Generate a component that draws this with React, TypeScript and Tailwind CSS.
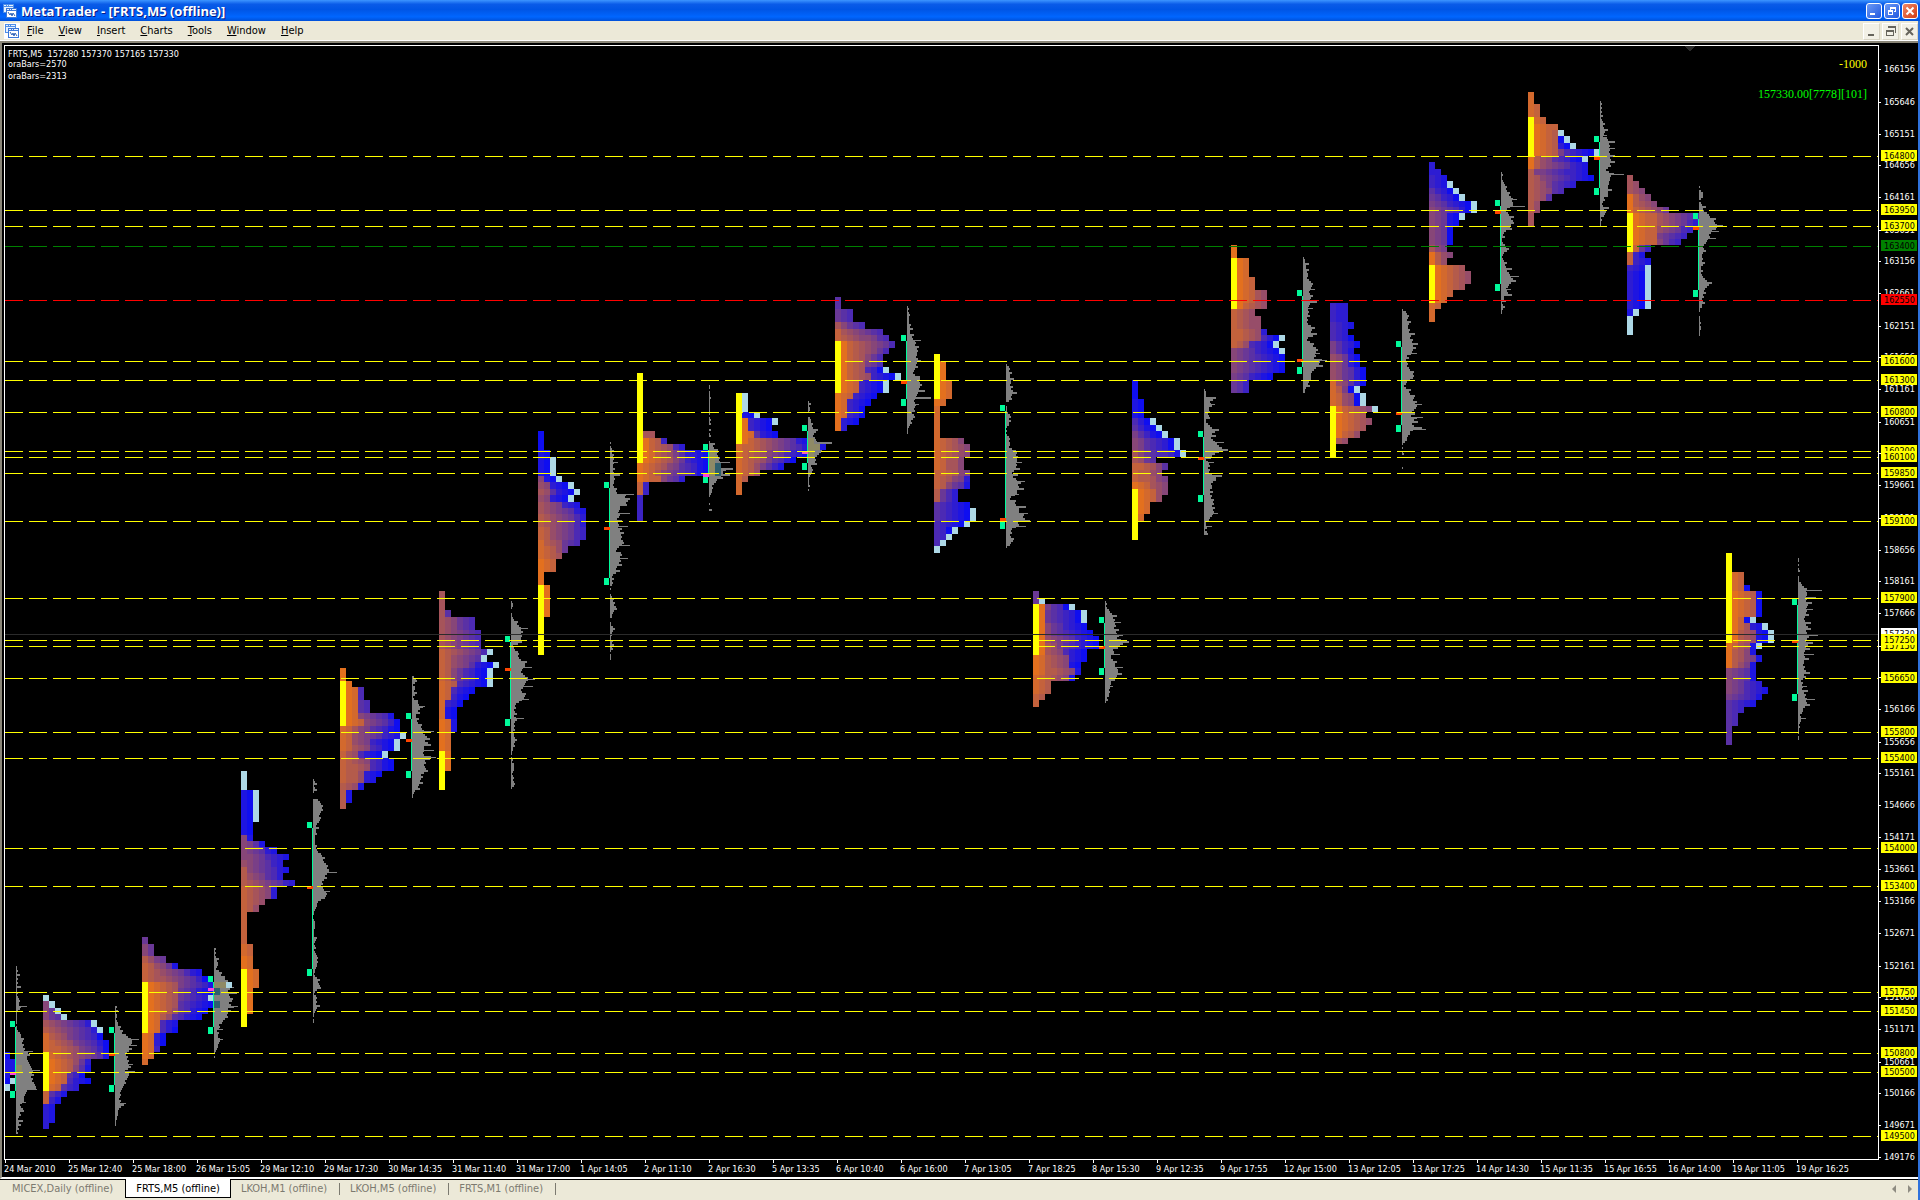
import { Fragment } from "react";

const TOP_PRICE = 164800;
const POINTS_PER_PX = 15.612;

const rowY = (price: number) => Math.round(155.7 + (TOP_PRICE - price) / POINTS_PER_PX);
const lineY = (price: number) => Math.round(156 + (TOP_PRICE - price) / POINTS_PER_PX);

// half-hour periods of a session: first one yellow, last one light blue, the rest fade orange -> blue
const cellColors: Record<string, string> = {
  Y: "#ffff00",
  a: "#e3701e",
  b: "#d3692d",
  c: "#c4623c",
  d: "#b45b4b",
  e: "#a6545a",
  f: "#974d69",
  g: "#874678",
  h: "#793f87",
  i: "#6a3896",
  j: "#5a31a5",
  k: "#4c2ab4",
  l: "#3c23c3",
  m: "#2d1cd2",
  n: "#1e15e1",
  o: "#0f0ef0",
  L: "#add8e6",
  K: "#8f8a66",
  T: "#2f5f6e",
};

type Session = {
  top: number; // price of the first row
  rows: string; // one word per 100 points, "word*3" repeats it
  volumeY: number;
  volume: string; // base 36 width for every 2px, "." is empty
  spikes: number[][];
  high: number;
  low: number;
  poc: number;
  pocColor?: string;
};

const sessions: Session[] = [
  {
    top: 150800,
    rows: "__________o __________nn __________nnK __________n __________oL __________L",
    volumeY: 966,
    volume: "11214121215112123433542111111.1124558768798cebbcdefghgifhgijkkba98886457845327352312",
    spikes: [[1006, 11], [1051, 17], [1070, 24], [1089, 21], [1102, 10]],
    high: 1021,
    low: 1091,
    poc: 1072,
    pocColor: "#ff40e0",
  },
  {
    top: 151700,
    rows: "L gL giL gijL efghijkmL defghijkmL bdefhijklo bcdefhijkmo bccdefhijlo Ybcdefghijn Yabcdfim Yabcdgjn Yabcjlo Yabckmno Ybcjlm cjln cln mn*3 m",
    volumeY: 1006,
    volume: "21312212336587bdghhgehecbdcedegdaeedcab987656546596433322111",
    spikes: [[1039, 24], [1045, 22], [1064, 18], [1071, 20], [1103, 11]],
    high: 1027,
    low: 1085,
    poc: 1053,
  },
  {
    top: 152600,
    rows: "i gi*2 dfhi cdfgin cdefghikmn cdeefghijlo YabcdehijklnKKL YabcdeijkmnoT YabcdeijklmL YabcdejklmnoT Yabcdfjkmno Yabdfjkmno Yabkmn Yabkmo abmo*2 abl ab b",
    volumeY: 948,
    volume: "21212534432587bbehiigehfgjifhkehedeb98565354466544321.1",
    spikes: [[987, 20], [993, 23], [1006, 24], [1029, 9], [1039, 9]],
    high: 976,
    low: 1027,
    poc: 988,
    pocColor: "#ff40e0",
  },
  {
    top: 155200,
    rows: "L*3 noL*5 no*2 gn ghjn ghijmn gghiklmn fghijlm dghijkmn dfghjkm defghijlm cdefgm*2 cdef cdf c*5 bc*2 ab*2 Yab*3 Ya*4 Y*2",
    volumeY: 779,
    volume: "1241241...578a9a87687643633422222434589cabdfeggeceb9a8abdedc85443211..1222211114321231234545443221247567842134343743211.11",
    spikes: [[872, 24], [891, 17]],
    high: 822,
    low: 969,
    poc: 886,
  },
  {
    top: 156800,
    rows: "a*2 Ya Yabk*2 Yabjk*2 Yabghijkn Yabcghijlo bceghjklno bcfghijlmnL bcfghlmnoL bcefgklnoL cefkmnoL cdefgklno cddefklno cddfmno cddfmn defn dn*2 d",
    volumeY: 676,
    volume: "245313325312667b86844756a9acbdfidgjcccbcjidecdegc9b98b7683211",
    spikes: [[706, 13], [731, 22], [750, 22], [757, 24]],
    high: 713,
    low: 771,
    poc: 739,
  },
  {
    top: 158000,
    rows: "e*3 ej efgijk*2 efghijk*3 cdefghikL cdfghijL cdfghjmnoL cdgiklnoL*2 bcdklmnoL bckmno bclno blmo bno*2 abn*2 ab*3 Ya*3 Y*3",
    volumeY: 601,
    volume: "1221..1123768aacabaab72347878ageecbacehhfedcabfedb854534635643434233464342211.1213333212323431",
    spikes: [[628, 17], [667, 21], [679, 24], [686, 22], [699, 18], [718, 13]],
    high: 636,
    low: 719,
    poc: 668,
  },
  {
    top: 160500,
    rows: "o*3 no noL*3 gnoL fgmnoL efjmnoL fgmnoL efghlmn efghijmn defghikm*2 cdfghikl*2 bdefijk bcdfi bcde abc*2 a*2 Ya*5 Y*6",
    volumeY: 442,
    volume: "1.12424343433534a454434767gfkighaa98a97c898caebcbdec976bcaab9c76a6324232.1..124354674322..113532211324231.111",
    spikes: [[462, 8], [494, 24], [513, 20], [526, 18], [545, 20], [558, 18]],
    high: 482,
    low: 578,
    poc: 527,
  },
  {
    top: 161400,
    rows: "Y*9 Yee Yacdl Yacdefkm YabdefhjmmnoK YabcdegilmnoK abcdeghjklnoKT abceghijklnoKT abccgijm cl*2 l*4",
    volumeY: 385,
    volume: "11.111211111111.1212..2.12..16459989babbccheece875343321...1..3",
    spikes: [[462, 21], [468, 24], [469, 24], [474, 21], [475, 21]],
    high: 444,
    low: 476,
    poc: 474,
    pocColor: "#ff40e0",
  },
  {
    top: 161100,
    rows: "YL*3 YnoL YalmnoL Yalmno Yabjmno YacdefghijmnK bccdefghijkmKKn bcdefghiklmoK bcdefhjkmo bcdfhjln bcdf bd b*2",
    volumeY: 401,
    volume: "131221..233545a865789dgeedb9787934543211112.1",
    spikes: [[442, 24], [443, 24]],
    high: 425,
    low: 463,
    poc: 451,
    pocColor: "#f060c0",
  },
  {
    top: 162600,
    rows: "j*2 ijk*2 egijk cefghijk cdefgghjk Yacdefghik Yacdefgik Yacdegik Yacdehik YacdekloL YacdeflmnoL YabclmnoL*2 abclmno ablmno ablmo*2 amno am",
    volumeY: 306,
    volume: "12123222243633756898cabaa9bea9b8768ddcdfdciba9878987857864532111",
    spikes: [[340, 14], [397, 24], [398, 24], [404, 12]],
    high: 335,
    low: 399,
    poc: 381,
  },
  {
    top: 161700,
    rows: "Y Ya*3 Yab*3 ab b*5 bcdeg bcdefg*2 bceeg*2 ccdegh cdeghm cdgijn dikm*2 jklmno jklmnoL*2 klmnoL kloL klL kL L",
    volumeY: 364,
    volume: "13436448554757b6563..11124535331.1.13434436abacbbabae86c7abfcdibb954a9akdddihjocda6564587541",
    spikes: [[462, 16], [481, 19], [494, 13], [513, 22], [526, 20]],
    high: 405,
    low: 522,
    poc: 518,
  },
  {
    top: 158000,
    rows: "i iL YahjkoL YaijklmoL*2 Yagijlmno Yagijklmno Yafghijlmno Yaefhjklmno Yaefgkmno abdefgmno abdefgno abddefgn bcdefgn bcd*2 cd c",
    volumeY: 601,
    volume: "1212457c8a9ab9ebcecgoifd899668caacddhcba66554544231",
    spikes: [[622, 16], [635, 18], [654, 15], [667, 18], [686, 8]],
    high: 617,
    low: 668,
    poc: 646,
  },
  {
    top: 161300,
    rows: "o*3 no*3 kmoL jlnoL hjlnoL ghjklmoL*2 egijkklnL efij ccdegj cddfg cddegh abcefg Yabcfg Yabcf Yab*2 Yb Y*3",
    volumeY: 389,
    volume: "1222c967855645622468fb8c79bdfiofb8724564658icc978869687a9a8b9a98652223134",
    spikes: [[404, 11], [442, 20], [449, 24], [462, 10], [513, 14], [526, 8]],
    high: 431,
    low: 495,
    poc: 457,
  },
  {
    top: 163400,
    rows: "a*2 Yab*3 Yabc*2 Yabcef*2 Yacdef cdef cdeff*2 ccdefm ccdefkmoL cdfklmoL ghijlmnoL ghijklmno*3 hijlmno ijl*2",
    volumeY: 257,
    volume: "1226336455468a98767a87e765565745458c98ea547badfdcdbjhgkdb98888657322",
    spikes: [[289, 12], [308, 10], [353, 17], [360, 24], [366, 20]],
    high: 290,
    low: 367,
    poc: 359,
  },
  {
    top: 162500,
    rows: "lmm*3 klmn klm klmo hjlmo hjln fgimo*2 fgijmo*2 bfgjmo bdhoL bcfgoL*2 YacdefgL Yabcde Yabcdef Yabcde Yacdf Yef Y*2",
    volumeY: 309,
    volume: "145765976687d98bagbeba957456578cbcb85424978dcbfdfecad9fcgackb8865531.1.12......1",
    spikes: [[353, 15], [404, 20], [417, 21], [429, 24]],
    high: 341,
    low: 425,
    poc: 412,
  },
  {
    top: 164700,
    rows: "m mm lmn lmnL jlmoL ijlmoL hijlmnoL ghijkmoL ghinoL ghino ghio*3 egh adfg adf Yabcde Yabcdef*2 Yabcde Yabc Yab bc b*2",
    volumeY: 172,
    volume: "121123465698acbcc96578dacda9b5324112458632123645b689acfa87567b335124211",
    spikes: [[199, 16], [206, 24], [276, 18], [289, 10]],
    high: 200,
    low: 284,
    poc: 211,
  },
  {
    top: 165800,
    rows: "b*2 bc*2 Ybc Yabcc YabcdL YabcdoL YabcdmoL YabcdhklmnoL adfgjklnoL adfghijlmn dhhijkllmn deghijklmno defhjklm defgjk defj df*2 e*2",
    volumeY: 101,
    volume: "12121213123534854378f9a9a9afabfab869ebaa9988c888453239465412111",
    spikes: [[135, 7], [148, 15], [174, 24]],
    high: 136,
    low: 188,
    poc: 157,
  },
  {
    top: 164500,
    rows: "e ef efg adfg adefg acdefgi Yabccefghijk Yabccefghikm Yabccfghikl Yabcchijkl Yabccgikl Ycil cln clmn lmnL mnoL*6 nL L*3",
    volumeY: 186,
    volume: "1.24442.237458abhfgiihdcab9875457433436422423468da8657453463311..1112122111",
    spikes: [[225, 24], [231, 20], [238, 17]],
    high: 213,
    low: 290,
    poc: 227,
  },
  {
    top: 158600,
    rows: "Y*3 Ybc*2 Ybco Yabcdo*4 YacoL YacemnL YadefnoL*2 acefnL adegn adeghn adfhn ghijn*2 ghiklm ghiklmn hijkln jklmn jkl jk*2 j*3",
    volumeY: 558,
    volume: "11.1.12..1113469899898ea9898b767d8ad89ab98fa8c7667b665768c68535454a687989c75542333212111.11",
    spikes: [[590, 24], [597, 18], [609, 15], [635, 20], [646, 14], [654, 16], [686, 9], [699, 17], [718, 8]],
    high: 599,
    low: 694,
    poc: 640,
  },
];

const levels = [
  164800, 163950, 163700, 163400, 162550, 161600, 161300, 160800, 160200, 160100, 159850, 159100, 157900,
  157150, 157250, 156650, 155800, 155400, 154000, 153400, 151750, 151450, 150800, 150500, 149500,
];

const levelColor = (price: number) => (price === 163400 ? "#008000" : price === 162550 ? "#ff0000" : "#ffff00");

const scale = [
  166156, 165646, 165151, 164656, 164161, 163651, 163156, 162661, 162151, 161656, 161161, 160651, 160156, 159661,
  159151, 158656, 158161, 157666, 157156, 156661, 156166, 155656, 155161, 154666, 154171, 153661, 153166, 152671,
  152161, 151666, 151171, 150661, 150166, 149671, 149176,
];

const times = [
  "24 Mar 2010", "25 Mar 12:40", "25 Mar 18:00", "26 Mar 15:05", "29 Mar 12:10", "29 Mar 17:30", "30 Mar 14:35",
  "31 Mar 11:40", "31 Mar 17:00", "1 Apr 14:05", "2 Apr 11:10", "2 Apr 16:30", "5 Apr 13:35", "6 Apr 10:40",
  "6 Apr 16:00", "7 Apr 13:05", "7 Apr 18:25", "8 Apr 15:30", "9 Apr 12:35", "9 Apr 17:55", "12 Apr 15:00",
  "13 Apr 12:05", "13 Apr 17:25", "14 Apr 14:30", "15 Apr 11:35", "15 Apr 16:55", "16 Apr 14:00", "19 Apr 11:05",
  "19 Apr 16:25",
];

const menus = ["File", "View", "Insert", "Charts", "Tools", "Window", "Help"];
const tabs = ["MICEX,Daily (offline)", "FRTS,M5 (offline)", "LKOH,M1 (offline)", "LKOH,M5 (offline)", "FRTS,M1 (offline)"];

function expandRows(rows: string) {
  return rows.split(" ").flatMap((word) => {
    const [cells, count] = word.split("*");
    return Array.from({ length: Number(count ?? 1) }, () => cells);
  });
}

function Profile({ session, x }: { session: Session; x: number }) {
  const cells = expandRows(session.rows).flatMap((row, r) => {
    const y = rowY(session.top - r * 100);
    const h = rowY(session.top - (r + 1) * 100) - y;
    return row
      .split("")
      .map((c, i) => ({ c, x: x + i * 6, y, h }))
      .filter((cell) => cell.c !== "_");
  });
  const draw = (list: typeof cells) =>
    list.map((cell) => (
      <rect key={`${cell.x}-${cell.y}`} x={cell.x} y={cell.y} width={6} height={cell.h} fill={cellColors[cell.c]} />
    ));
  // long rows run over the volume bars
  const overlaid = (cellX: number) => cellX >= x + 72;

  return (
    <g>
      {draw(cells.filter((cell) => !overlaid(cell.x)))}
      <g fill="#808080">
        {session.volume.split("").map((w, i) =>
          w === "." ? null : (
            <rect key={i} x={x + 72} y={session.volumeY + i * 2} width={parseInt(w, 36)} height={2} />
          )
        )}
        {session.spikes.map(([y, w]) => (
          <rect key={`s${y}`} x={x + 72} y={y} width={w} height={1} />
        ))}
      </g>
      {draw(cells.filter((cell) => overlaid(cell.x)))}
      <rect x={x + 71} y={session.high + 6} width={1} height={session.low - session.high - 6} fill="#00fa9a" />
      <rect x={x + 66} y={session.high} width={5} height={6} fill="#00fa9a" />
      <rect x={x + 66} y={session.low} width={5} height={7} fill="#00fa9a" />
      <rect x={x + 66} y={session.poc} width={6} height={3} fill={session.pocColor ?? "#ff4500"} />
    </g>
  );
}

function Chart() {
  return (
    <svg
      viewBox="2 43 1916 1134"
      className="block h-full w-full font-['DejaVu_Sans_Condensed','DejaVu_Sans',sans-serif] text-[9px]"
      shapeRendering="crispEdges"
      role="img"
      aria-label="FRTS,M5"
    >
      {sessions.map((session, i) => (
        <Profile key={i} session={session} x={i * 99 - 56} />
      ))}

      <rect x={5} y={634} width={1873} height={1} fill="#2b2b2b" />
      {levels.map((price) => (
        <line
          key={price}
          x1={5}
          x2={1878}
          y1={lineY(price) + 0.5}
          y2={lineY(price) + 0.5}
          stroke={levelColor(price)}
          strokeDasharray="18 6"
        />
      ))}

      <g fill="#ffffff">
        <rect x={4} y={45} width={1875} height={1} />
        <rect x={4} y={45} width={1} height={1114} />
        <rect x={4} y={1159} width={1875} height={1} />
        <rect x={1878} y={45} width={1} height={1115} />
      </g>
      <path d="M1684 46h11l-5 5h-1z" fill="#2b2b2b" />

      {scale.map((price) => (
        <Fragment key={price}>
          <rect x={1879} y={lineY(price)} width={2} height={1} fill="#ffffff" />
          <text x={1884} y={lineY(price) + 3} fill="#ffffff">{price}</text>
        </Fragment>
      ))}
      <rect x={1881} y={628} width={36} height={11} fill="#ffffff" />
      <text x={1884} y={637} fill="#000000">157330</text>
      {levels.map((price) => (
        <Fragment key={price}>
          <rect x={1881} y={lineY(price) - 6} width={36} height={11} fill={levelColor(price)} />
          <text x={1884} y={lineY(price) + 3} fill="#000000">{price}</text>
        </Fragment>
      ))}

      {times.map((label, i) => (
        <Fragment key={label}>
          <rect x={5 + i * 64} y={1160} width={1} height={3} fill="#ffffff" />
          <text x={4 + i * 64} y={1172} fill="#ffffff">{label}</text>
        </Fragment>
      ))}

      <text x={8} y={57} fill="#ffffff" xmlSpace="preserve">FRTS,M5  157280 157370 157165 157330</text>
      <text x={8} y={67} fill="#ffffff">oraBars=2570</text>
      <text x={8} y={79} fill="#ffffff">oraBars=2313</text>
      <g className="font-['Liberation_Serif',serif] text-[12px]" textAnchor="end">
        <text x={1867} y={68} fill="#ffff00">-1000</text>
        <text x={1867} y={98} fill="#00ff00">157330.00[7778][101]</text>
      </g>
    </svg>
  );
}

function AppIcon() {
  return (
    <svg viewBox="0 0 14 14" className="h-[14px] w-[14px] shrink-0" shapeRendering="crispEdges" aria-hidden="true">
      <path d="M0 0h11v9H0z" fill="#4f8fe8" />
      <path d="M1 3h9v5H1z" fill="#e8f2ff" />
      <path d="M1 1h2v1H1zM4 1h1v1H4zM6 1h4v1H6z" fill="#e8f2ff" />
      <path d="M3 4h11v10H3z" fill="#3c78d8" />
      <path d="M4 7h9v6H4z" fill="#ffffff" />
      <path d="M4 5h2v1H4zM7 5h1v1H7zM9 5h4v1H9z" fill="#e8f2ff" />
      <path d="M5 8l2 3 1-2 1 3 1-3 2 3" fill="none" stroke="#2f62b8" shapeRendering="auto" />
    </svg>
  );
}

function TitleBar() {
  const button = "flex h-4 w-4 items-center justify-center rounded-[3px] border border-white text-white";
  return (
    <header className="flex h-[21px] shrink-0 items-center bg-[linear-gradient(#3d95ff_0%,#0a5be8_20%,#0055e5_45%,#0066ff_80%,#0050d8_100%)] pl-[3px] pr-[2px]">
      <AppIcon />
      <h1 className="ml-1 flex-1 font-['Open_Sans',sans-serif] text-[13px] font-bold leading-5 text-white [text-shadow:1px_1px_0_#0a1883]">
        MetaTrader - [FRTS,M5 (offline)]
      </h1>
      <div className="flex gap-[2px]">
        <button aria-label="Minimize" className={`${button} bg-[linear-gradient(135deg,#6c9af5,#2159e0)]`}>
          <svg viewBox="0 0 14 14" className="h-[14px] w-[14px]" shapeRendering="crispEdges">
            <path d="M3 9h5v2H3z" fill="currentColor" />
          </svg>
        </button>
        <button aria-label="Restore" className={`${button} bg-[linear-gradient(135deg,#6c9af5,#2159e0)]`}>
          <svg viewBox="0 0 14 14" className="h-[14px] w-[14px]" shapeRendering="crispEdges">
            <path d="M5 3h6v5H9V7h1V5H6v1H5zM3 6h5v5H3zM4 8v2h3V8z" fill="currentColor" fillRule="evenodd" />
          </svg>
        </button>
        <button aria-label="Close" className={`${button} bg-[linear-gradient(135deg,#f08868,#d03c14)]`}>
          <svg viewBox="0 0 14 14" className="h-[14px] w-[14px]">
            <path d="M3.5 3.5l7 7M10.5 3.5l-7 7" stroke="currentColor" strokeWidth="2" />
          </svg>
        </button>
      </div>
    </header>
  );
}

function MenuBar() {
  const button =
    "flex h-[17px] w-[17px] items-center justify-center border border-white border-r-[#d8d4c4] border-b-[#d8d4c4] bg-[#f2f0e6] text-[#66645c]";
  return (
    <div className="flex h-5 shrink-0 items-center bg-[#ece9d8] pl-1">
      <span className="flex h-4 w-4 items-center justify-center bg-white">
        <AppIcon />
      </span>
      <nav className="ml-[-1px] flex flex-1">
        {menus.map((menu) => (
          <button key={menu} className="pl-2 pr-[7px] text-[11px] leading-4 text-black">
            <span className="underline underline-offset-1">{menu[0]}</span>
            {menu.slice(1)}
          </button>
        ))}
      </nav>
      <div className="flex gap-[2px]">
        <button aria-label="Minimize chart" className={button}>
          <svg viewBox="0 0 15 15" className="h-[15px] w-[15px]" shapeRendering="crispEdges">
            <path d="M4 10h6v2H4z" fill="currentColor" />
          </svg>
        </button>
        <button aria-label="Restore chart" className={button}>
          <svg viewBox="0 0 15 15" className="h-[15px] w-[15px]" shapeRendering="crispEdges">
            <path d="M5 2h8v7h-1V4H5zM3 6h8v6H3zM4 8v3h6V8z" fill="currentColor" fillRule="evenodd" />
          </svg>
        </button>
        <button aria-label="Close chart" className={button}>
          <svg viewBox="0 0 15 15" className="h-[15px] w-[15px]">
            <path d="M4 4l7 7M11 4l-7 7" stroke="currentColor" strokeWidth="2" />
          </svg>
        </button>
      </div>
    </div>
  );
}

function TabBar() {
  return (
    <footer className="flex h-[21px] shrink-0 items-start border-t border-black bg-[#ece9d8] pl-[2px] text-[11px]">
      {tabs.map((tab, i) =>
        i === 1 ? (
          <button
            key={tab}
            className="-mt-px h-[19px] border border-t-0 border-black bg-white px-[10px] leading-[17px] text-black"
          >
            {tab}
          </button>
        ) : (
          <button key={tab} className="flex h-[18px] items-center pl-[10px] text-[#7c7a70]">
            {tab}
            {i > 1 ? <span className="ml-3 h-3 w-px bg-[#7c7a70]" /> : <span className="w-3" />}
          </button>
        )
      )}
      <div className="ml-auto flex h-[18px] items-center gap-3 pr-[6px] text-[#8e8c82]">
        <button aria-label="Scroll tabs left">
          <svg viewBox="0 0 4 8" className="h-2 w-1"><path d="M4 0v8L0 4z" fill="currentColor" /></svg>
        </button>
        <button aria-label="Scroll tabs right">
          <svg viewBox="0 0 4 8" className="h-2 w-1"><path d="M0 0v8l4-4z" fill="currentColor" /></svg>
        </button>
      </div>
    </footer>
  );
}

export default function App() {
  return (
    <div className="flex h-screen flex-col overflow-hidden bg-[#ece9d8] font-['DejaVu_Sans_Condensed','DejaVu_Sans',sans-serif]">
      <TitleBar />
      <div className="flex min-h-0 flex-1 flex-col border-r-2 border-[#2f72dc]">
        <MenuBar />
        <main className="min-h-0 flex-1 border-b-2 border-l-2 border-t-2 border-b-white border-l-[#8a8678] border-t-[#8a8678] bg-black shadow-[0_-1px_0_#fff]">
          <Chart />
        </main>
        <TabBar />
      </div>
    </div>
  );
}
